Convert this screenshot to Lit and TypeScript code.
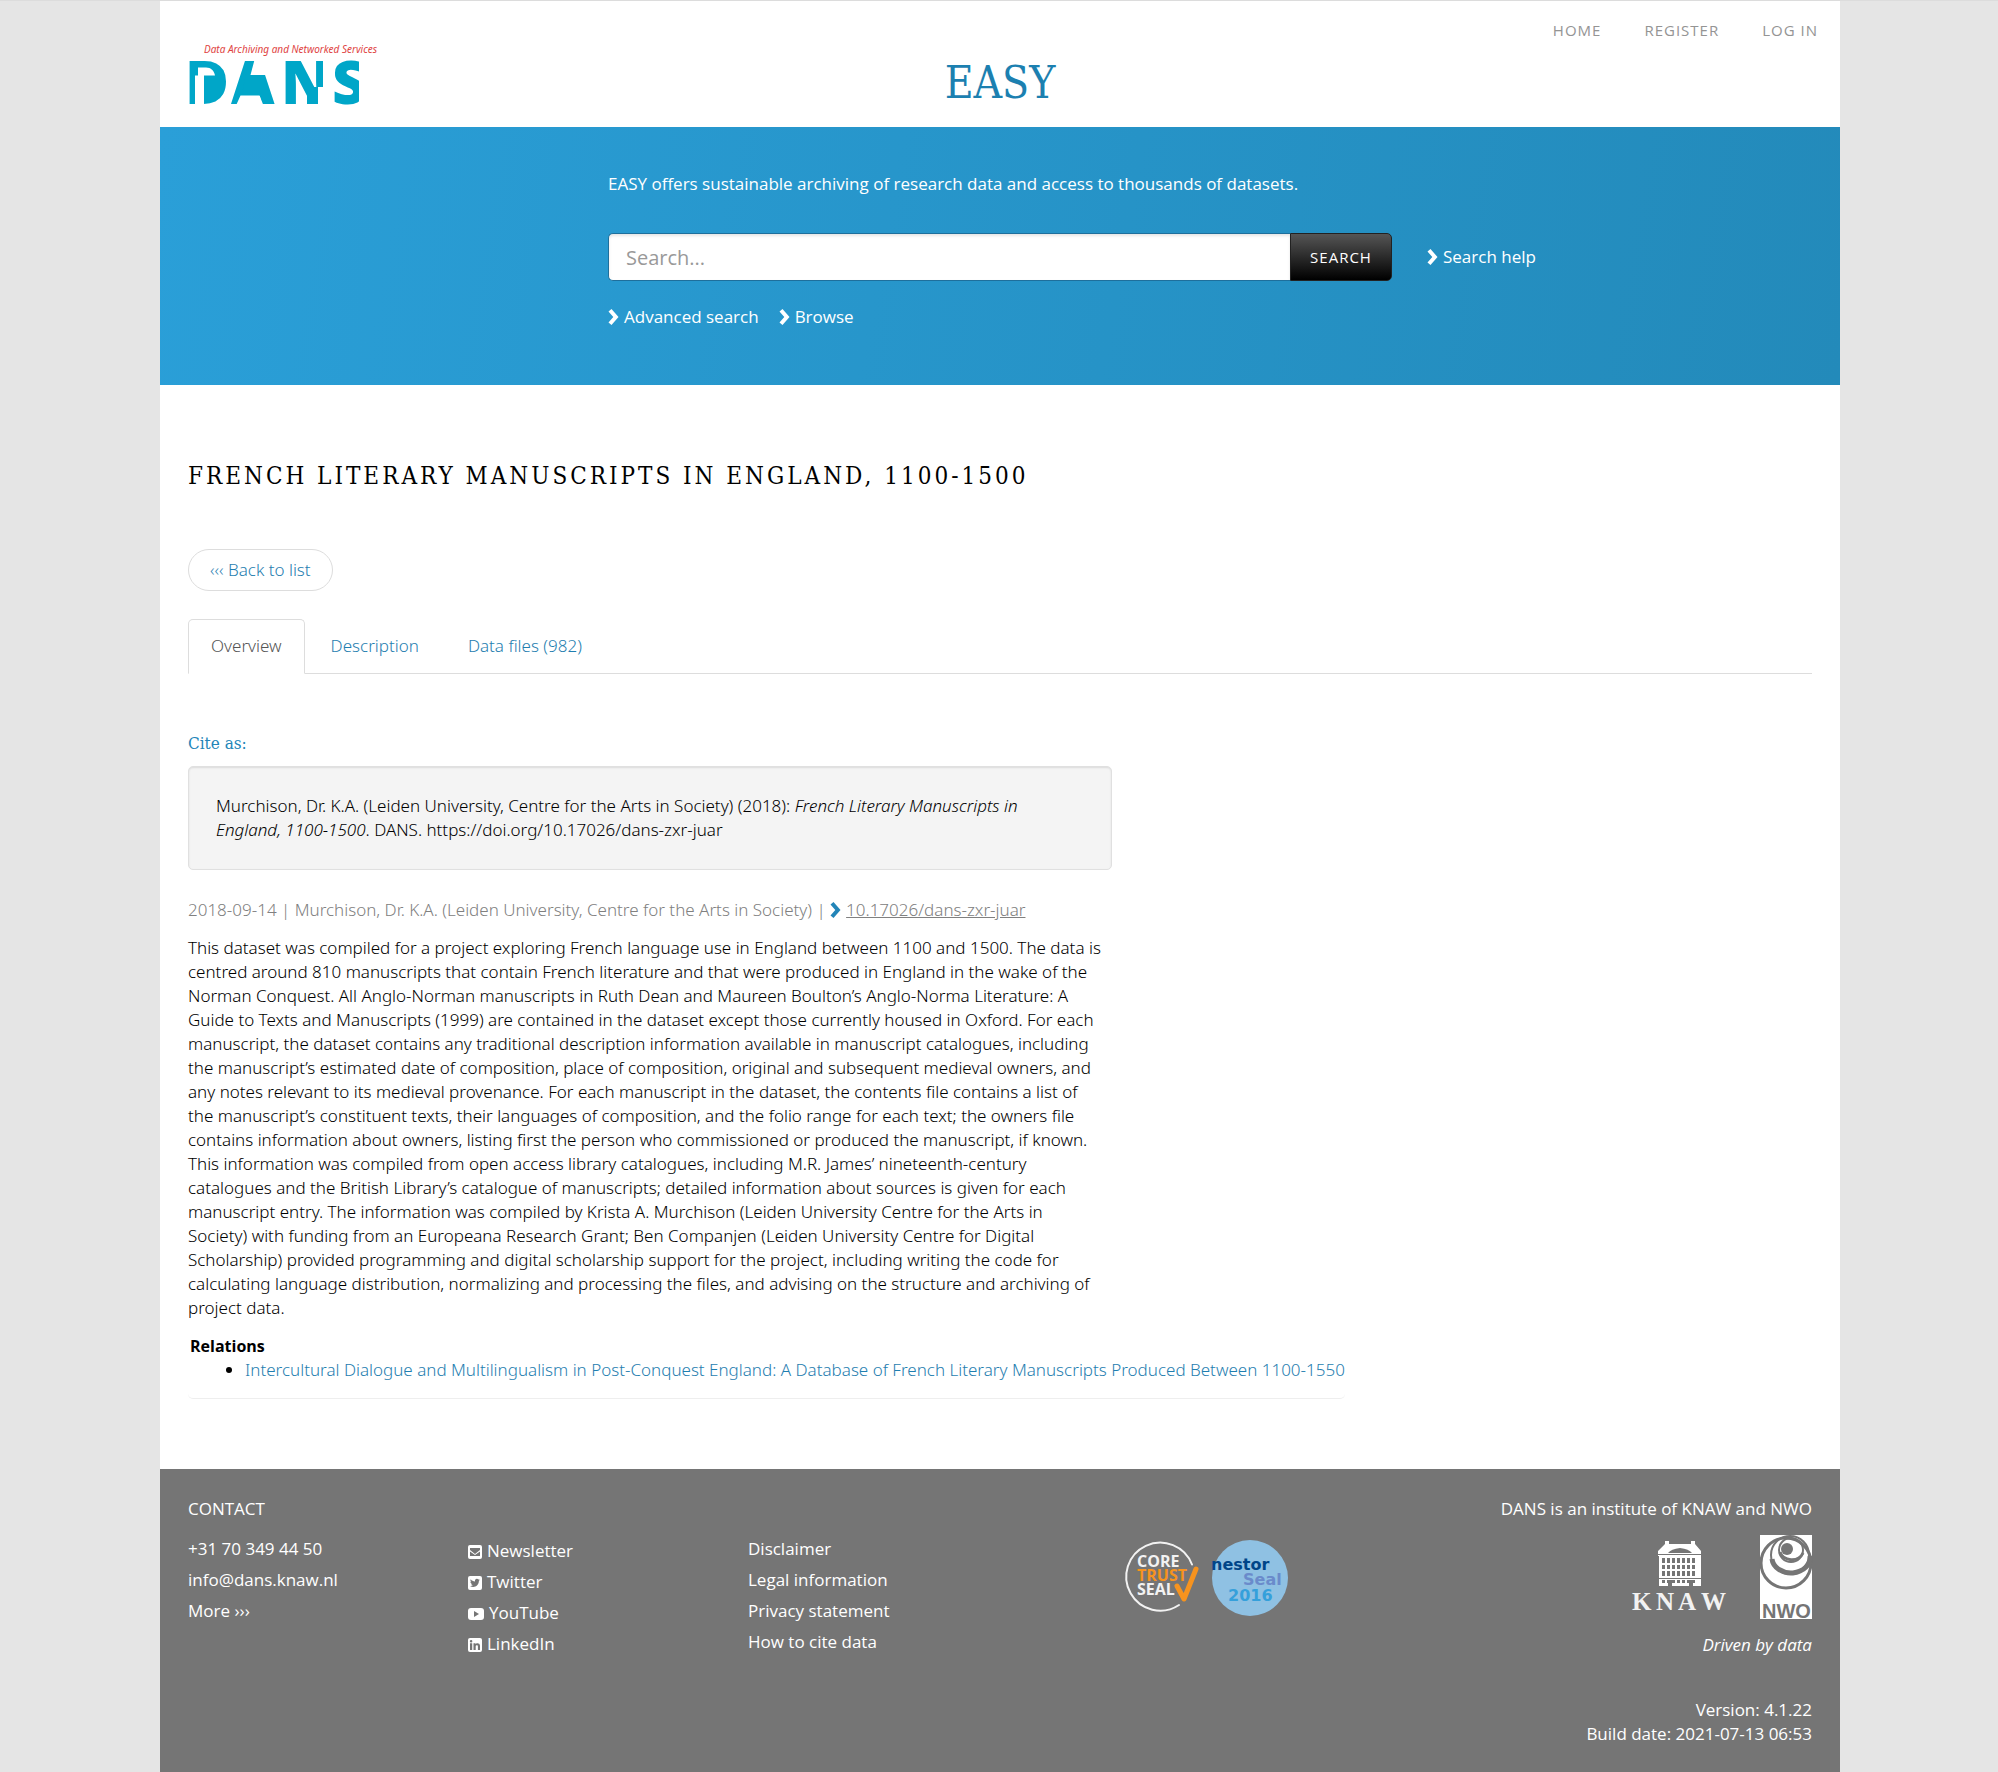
import { LitElement, html, svg, css } from "lit";
import { customElement } from "lit/decorators.js";

const ICONS = {
  mail: svg`<rect x="0" y="1" width="14" height="14" rx="2" fill="#fff"/><path d="M2 5v1l5 4 5-4V4H2zM2 7.500v4.500h10V7.500L7 11z" fill="#757575"/>`,
  twitter: svg`<rect x="0" y="1" width="14" height="14" rx="2" fill="#fff"/><path d="M12 4.800c-.4.200-.8.300-1.200.3.400-.3.700-.7.900-1.100-.4.200-.8.400-1.300.5A2 2 0 0 0 7 6.400C5.200 6.300 3.700 5.500 2.700 4.200c-.5.900-.3 2.100.6 2.700-.3 0-.6-.1-.9-.2 0 1 .7 1.800 1.600 2-.3.100-.6.100-.9 0 .3.800 1 1.400 1.900 1.400-.8.600-1.900 1-3 .9 4.200 2.500 9-.4 8.900-5.200.4-.3.800-.6 1.100-1z" fill="#757575"/>`,
  youtube: svg`<rect x="0" y="2" width="16" height="12" rx="3" fill="#fff"/><path d="M6 5v6l5-3z" fill="#757575"/>`,
  linkedin: svg`<rect x="0" y="1" width="14" height="14" rx="2" fill="#fff"/><path d="M2 6.300h2.200V13H2zM3.100 3a1.200 1.200 0 1 1 0 2.500 1.200 1.200 0 0 1 0-2.500zM5.500 6.300h2v.9c.8-1.500 4.500-1.600 4.500 1.600V13H9.900V9.200c0-1.500-2.200-1.300-2.200 0V13H5.500z" fill="#757575"/>`,
};

const SOCIAL = [
  { icon: ICONS.mail, label: "Newsletter", width: 14 },
  { icon: ICONS.twitter, label: "Twitter", width: 14 },
  { icon: ICONS.youtube, label: "YouTube", width: 16 },
  { icon: ICONS.linkedin, label: "LinkedIn", width: 14 },
];

const LEGAL = ["Disclaimer", "Legal information", "Privacy statement", "How to cite data"];

const chevron = html`<svg class="chevron" viewBox="0 0 11 16" width="11" height="16" aria-hidden="true">
  <path d="M0.500 2.500 3.500 0 10.500 8 3.500 16 0.500 13.500 5.300 8z" fill="currentColor"/>
</svg>`;

@customElement("dans-logo")
export class DansLogo extends LitElement {
  static styles = css`
    :host { display: block; line-height: 0; }
    svg { overflow: visible; }
    .tagline { font: italic 400 10px "Noto Sans", sans-serif; fill: #e0433f; }
    .mark { font: 800 60px "Open Sans", sans-serif; fill: #00a6c8; }
    .fill { fill: #00a6c8; }
    .cut { fill: #fff; }
  `;
  render() {
    return html`<svg width="200" height="64" viewBox="0 0 200 64" role="img" aria-label="DANS">
      <text class="mark" x="-3 43 93 144" y="62">DANS</text>
      <path class="fill" d="M12 28h14v28H14zM60 22h5l-2 11h8l2 19H54zM119 45h11v17h-11z"/>
      <path class="cut" d="M10 25.500h8c5 0 8 3 9 8H16V62H7V33.500h3zM67 16h14v17H62.500zM52.500 53.500h19l4 10H48zM130 45h10v19h-10zM135 16h4v30h-4zM171 16h8v48h-8z"/>
      <text class="tagline" x="16" y="11">Data Archiving and Networked Services</text>
    </svg>`;
  }
}

@customElement("core-trust-seal")
export class CoreTrustSeal extends LitElement {
  static styles = css`
    :host { display: block; line-height: 0; }
    svg { overflow: visible; }
    .word { font: 700 16px "Open Sans", sans-serif; fill: #f2f2f2; }
    .trust { fill: #f7931e; }
  `;
  render() {
    return html`<svg width="76" height="76" viewBox="0 0 76 76" role="img" aria-label="Core Trust Seal">
      <path d="M67 25.500A34 34 0 1 0 54 66" fill="none" stroke="#f2f2f2" stroke-width="2" stroke-linecap="round"/>
      <text class="word" x="12" y="28">CORE</text>
      <text class="word trust" x="12" y="42">TRUST</text>
      <text class="word" x="12" y="56">SEAL</text>
      <path d="M52 47l7 13 12-30" fill="none" stroke="#f7931e" stroke-width="5" stroke-linecap="round" stroke-linejoin="round"/>
    </svg>`;
  }
}

@customElement("nestor-seal")
export class NestorSeal extends LitElement {
  static styles = css`
    :host { display: block; line-height: 0; }
    svg { overflow: visible; }
    text { font: 700 16px "DejaVu Sans", sans-serif; }
    .name { fill: #004588; }
    .seal { fill: #6a8bcb; }
    .year { fill: #35a0db; }
  `;
  render() {
    return html`<svg width="78" height="78" viewBox="0 0 78 78" role="img" aria-label="nestor Seal 2016">
      <circle cx="39" cy="39" r="38" fill="#8fc1e3"/>
      <text class="name" x="0" y="31">nestor</text>
      <text class="seal" x="32" y="46">Seal</text>
      <text class="year" x="17" y="62">2016</text>
    </svg>`;
  }
}

@customElement("knaw-logo")
export class KnawLogo extends LitElement {
  static styles = css`
    :host { display: block; line-height: 0; }
    svg { overflow: visible; }
    .name { font: 700 25px "Liberation Serif", serif; fill: #f2f2f2; }
  `;
  render() {
    const columns = [8, 13, 18, 23, 28, 33, 38];
    return html`<svg width="96" height="76" viewBox="0 0 96 76" role="img" aria-label="KNAW">
      <g transform="translate(22 1)">
        <path d="M4 20v-5l7-7V5h4v3h22V5h4v3l6 7v5z" fill="#fff"/>
        <path d="M14 17h24q-3-4-12-5-9 1-12 5z" fill="#757575"/>
        <path d="M5 19h42v31H5z" fill="#fff"/>
        <path d="M4 18.500h44M4 42.500h44" stroke="#757575" stroke-width="1"/>
        ${columns.map((x) => svg`<path d="M${x} 22h3v5h-3zM${x} 29h3v4h-3zM${x} 35h3v5h-3zM${x} 44h3v3h-3z" fill="#757575"/>`)}
        <path d="M14 44h4v6h-4zM35 44h4v6h-4z" fill="#757575"/>
      </g>
      <text class="name" x="0 24 46 69" y="75">KNAW</text>
    </svg>`;
  }
}

@customElement("nwo-logo")
export class NwoLogo extends LitElement {
  static styles = css`
    :host { display: block; line-height: 0; }
    svg { overflow: visible; }
    .name { font: 700 20px "Liberation Sans", sans-serif; fill: #757575; }
  `;
  render() {
    return html`<svg width="52" height="84" viewBox="0 0 52 84" role="img" aria-label="NWO">
      <rect width="52" height="84" fill="#fff"/>
      <g fill="none" stroke="#757575">
        <circle cx="26" cy="28" r="25" stroke-width="3"/>
        <circle cx="30" cy="20" r="19" stroke-width="2"/>
        <path d="M12 24a18.500 15 0 0 0 38-3" stroke-width="5"/>
        <circle cx="31" cy="15" r="12" stroke-width="2"/>
        <path d="M20 17a12 10 0 0 0 23 1" stroke-width="3"/>
      </g>
      <circle cx="27" cy="14" r="6" fill="#757575"/>
      <text class="name" x="2" y="83">NWO</text>
    </svg>`;
  }
}

@customElement("app-root")
export class AppRoot extends LitElement {
  static styles = css`
    :host {
      display: block;
      min-height: 100vh;
      box-sizing: border-box;
      border-top: 1px solid #dcdcdc;
      padding-left: 2px;
      background: #e5e5e5;
      color: #000;
      font: 300 17px/24px "Noto Sans", "Open Sans", sans-serif;
    }
    * { box-sizing: border-box; }
    a { color: #1f7eb0; text-decoration: none; }
    h1, h2, h3, p, ul { margin: 0; padding: 0; font-weight: inherit; font-size: inherit; }
    .page {
      display: flex;
      flex-direction: column;
      max-width: 1680px;
      min-height: calc(100vh - 1px);
      margin: 0 auto;
      background: #fff;
    }
    .header {
      display: grid;
      grid-template-columns: 1fr auto 1fr;
      height: 126px;
      padding: 0 28px;
    }
    .logo { padding-top: 41px; }
    .brand {
      padding-top: 50px;
      font: 400 44px/64px "DejaVu Serif Condensed", "DejaVu Serif", serif;
      color: #1c80b0;
    }
    .nav {
      display: flex;
      justify-content: flex-end;
      gap: 43px;
      margin-right: -6px;
      padding-top: 17px;
      font-family: "Open Sans", sans-serif;
      font-size: 15px;
      font-weight: 400;
      letter-spacing: 1px;
    }
    .nav a { color: #949494; }
    .hero {
      padding: 45px 28px 56px 448px;
      background: linear-gradient(100deg, #2a9fd8 0%, #238aba 100%);
      color: #fff;
      font-family: "Open Sans", sans-serif;
      font-weight: 400;
    }
    .hero a { color: #fff; }
    .search { display: flex; align-items: center; margin-top: 37px; gap: 35px; }
    .field { display: flex; width: 784px; height: 48px; }
    .input {
      flex: 1;
      min-width: 0;
      padding: 0 17px;
      border: 1px solid #1e6f9c;
      border-right: 0;
      border-radius: 5px 0 0 5px;
      background: #fff;
      box-shadow: inset 0 2px 3px #0000001a;
      color: #333;
      font: 400 20px "Open Sans", sans-serif;
    }
    .input::placeholder { color: #999; opacity: 1; }
    .submit {
      width: 102px;
      padding: 0;
      border: 1px solid #222;
      border-radius: 0 5px 5px 0;
      background: linear-gradient(#555, #000);
      color: #fff;
      font: 400 15px "Open Sans", sans-serif;
      letter-spacing: 1px;
    }
    .chevron { vertical-align: -2px; margin-right: 5px; }
    .links { display: flex; gap: 20px; margin-top: 24px; }
    .content { flex: 1; padding: 71px 28px 68px; }
    .title {
      font: 400 24px/40px "DejaVu Serif Condensed", "DejaVu Serif", serif;
      letter-spacing: 3px;
      text-transform: uppercase;
    }
    .back {
      display: inline-block;
      margin-top: 53px;
      padding: 8px 21px;
      border: 1px solid #ddd;
      border-radius: 21px;
    }
    .tabs { display: flex; gap: 3px; margin-top: 28px; border-bottom: 1px solid #ddd; }
    .tab {
      margin-bottom: -1px;
      padding: 14px 22px 15px;
      border: 1px solid transparent;
      border-radius: 5px 5px 0 0;
    }
    .tab.active { border-color: #ddd #ddd #fff; background: #fff; color: #555; }
    .cite-title { margin-top: 57px; color: #2385b8; font: 400 17px/24px "DejaVu Serif Condensed", "DejaVu Serif", serif; }
    .cite {
      max-width: 924px;
      margin-top: 11px;
      padding: 27px;
      border: 1px solid #e0e0e0;
      border-radius: 5px;
      background: #f4f4f4;
      box-shadow: inset 0 1px 2px #0000001a;
    }
    .meta { margin-top: 28px; color: #808080; }
    .meta a { color: #808080; text-decoration: underline; }
    .meta .chevron { color: #2385b8; }
    .abstract { max-width: 914px; margin-top: 14px; }
    .relations {
      width: fit-content;
      margin-top: 14px;
      padding: 0 0 16px;
      border-bottom: 1px solid #eee;
      border-radius: 5px;
    }
    .relations-title { padding-left: 2px; font-family: "Open Sans", sans-serif; font-size: 16px; font-weight: 700; }
    .relations-list { padding-left: 57px; }
    .footer {
      display: grid;
      grid-template-columns: repeat(12, 1fr);
      padding: 28px 0 26px;
      background: #757575;
      color: #fff;
      font-family: "Open Sans", sans-serif;
      font-weight: 400;
    }
    .footer a { color: #fff; }
    .column { grid-column: span 2; padding-left: 28px; line-height: 31px; }
    .list { list-style: none; }
    .list li { height: 31px; }
    .contact-title { line-height: 24px; }
    .contact-title + .list { margin-top: 12px; }
    .offset { padding-top: 36px; }
    .social { padding-top: 38px; }
    .social svg { margin-right: 5px; vertical-align: -3px; }
    .seals { grid-column: span 3; display: flex; justify-content: center; gap: 10px; padding: 42px 6px 0 0; }
    .institute { grid-column: span 3; padding-right: 28px; text-align: right; }
    .partners { display: flex; justify-content: flex-end; align-items: flex-start; gap: 32px; margin: 14px 0; }
    .build { margin-top: 41px; }
  `;

  render() {
    return html`
      <div class="page">
        <header class="header">
          <dans-logo class="logo"></dans-logo>
          <div class="brand">EASY</div>
          <nav class="nav" aria-label="Account">
            <a href="#home">HOME</a><a href="#register">REGISTER</a><a href="#login">LOG IN</a>
          </nav>
        </header>
        <section class="hero">
          <p>EASY offers sustainable archiving of research data and access to thousands of datasets.</p>
          <form class="search" role="search">
            <div class="field">
              <input class="input" type="search" placeholder="Search..." aria-label="Search" />
              <button class="submit" type="button">SEARCH</button>
            </div>
            <a href="#help">${chevron}Search help</a>
          </form>
          <div class="links">
            <a href="#advanced">${chevron}Advanced search</a>
            <a href="#browse">${chevron}Browse</a>
          </div>
        </section>
        <main class="content">
          <h1 class="title">French Literary Manuscripts in England, 1100-1500</h1>
          <a class="back" href="#list">‹‹‹ Back to list</a>
          <nav class="tabs" aria-label="Dataset">
            <a class="tab active" href="#overview">Overview</a>
            <a class="tab" href="#description">Description</a>
            <a class="tab" href="#files">Data files (982)</a>
          </nav>
          <h3 class="cite-title">Cite as:</h3>
          <p class="cite">Murchison, Dr. K.A. (Leiden University, Centre for the Arts in Society) (2018): <i>French Literary Manuscripts in England, 1100-1500</i>. DANS. https://doi.org/10.17026/dans-zxr-juar</p>
          <p class="meta">2018-09-14 | Murchison, Dr. K.A. (Leiden University, Centre for the Arts in Society) | ${chevron}<a href="#doi">10.17026/dans-zxr-juar</a></p>
          <p class="abstract">This dataset was compiled for a project exploring French language use in England between 1100 and 1500. The data is centred around 810 manuscripts that contain French literature and that were produced in England in the wake of the Norman Conquest. All Anglo-Norman manuscripts in Ruth Dean and Maureen Boulton’s Anglo-Norma Literature: A Guide to Texts and Manuscripts (1999) are contained in the dataset except those currently housed in Oxford. For each manuscript, the dataset contains any traditional description information available in manuscript catalogues, including the manuscript’s estimated date of composition, place of composition, original and subsequent medieval owners, and any notes relevant to its medieval provenance. For each manuscript in the dataset, the contents file contains a list of the manuscript’s constituent texts, their languages of composition, and the folio range for each text; the owners file contains information about owners, listing first the person who commissioned or produced the manuscript, if known. This information was compiled from open access library catalogues, including M.R. James’ nineteenth-century catalogues and the British Library’s catalogue of manuscripts; detailed information about sources is given for each manuscript entry. The information was compiled by Krista A. Murchison (Leiden University Centre for the Arts in Society) with funding from an Europeana Research Grant; Ben Companjen (Leiden University Centre for Digital Scholarship) provided programming and digital scholarship support for the project, including writing the code for calculating language distribution, normalizing and processing the files, and advising on the structure and archiving of project data.</p>
          <div class="relations">
            <h3 class="relations-title">Relations</h3>
            <ul class="relations-list">
              <li><a href="#relation">Intercultural Dialogue and Multilingualism in Post-Conquest England: A Database of French Literary Manuscripts Produced Between 1100-1550</a></li>
            </ul>
          </div>
        </main>
        <footer class="footer">
          <div class="column">
            <h3 class="contact-title">CONTACT</h3>
            <ul class="list">
              <li>+31 70 349 44 50</li>
              <li><a href="#mail">info@dans.knaw.nl</a></li>
              <li><a href="#more">More ›››</a></li>
            </ul>
          </div>
          <div class="column social">
            <ul class="list">
              ${SOCIAL.map((s) => html`<li><a href="#${s.label.toLowerCase()}"><svg width=${s.width} height="16" viewBox="0 0 ${s.width} 16" aria-hidden="true">${s.icon}</svg>${s.label}</a></li>`)}
            </ul>
          </div>
          <div class="column offset">
            <ul class="list">
              ${LEGAL.map((label) => html`<li><a href="#legal">${label}</a></li>`)}
            </ul>
          </div>
          <div class="seals">
            <core-trust-seal></core-trust-seal>
            <nestor-seal></nestor-seal>
          </div>
          <div class="institute">
            <p>DANS is an institute of KNAW and NWO</p>
            <div class="partners"><knaw-logo></knaw-logo><nwo-logo></nwo-logo></div>
            <p><i>Driven by data</i></p>
            <p class="build">Version: 4.1.22<br />Build date: 2021-07-13 06:53</p>
          </div>
        </footer>
      </div>
    `;
  }
}
